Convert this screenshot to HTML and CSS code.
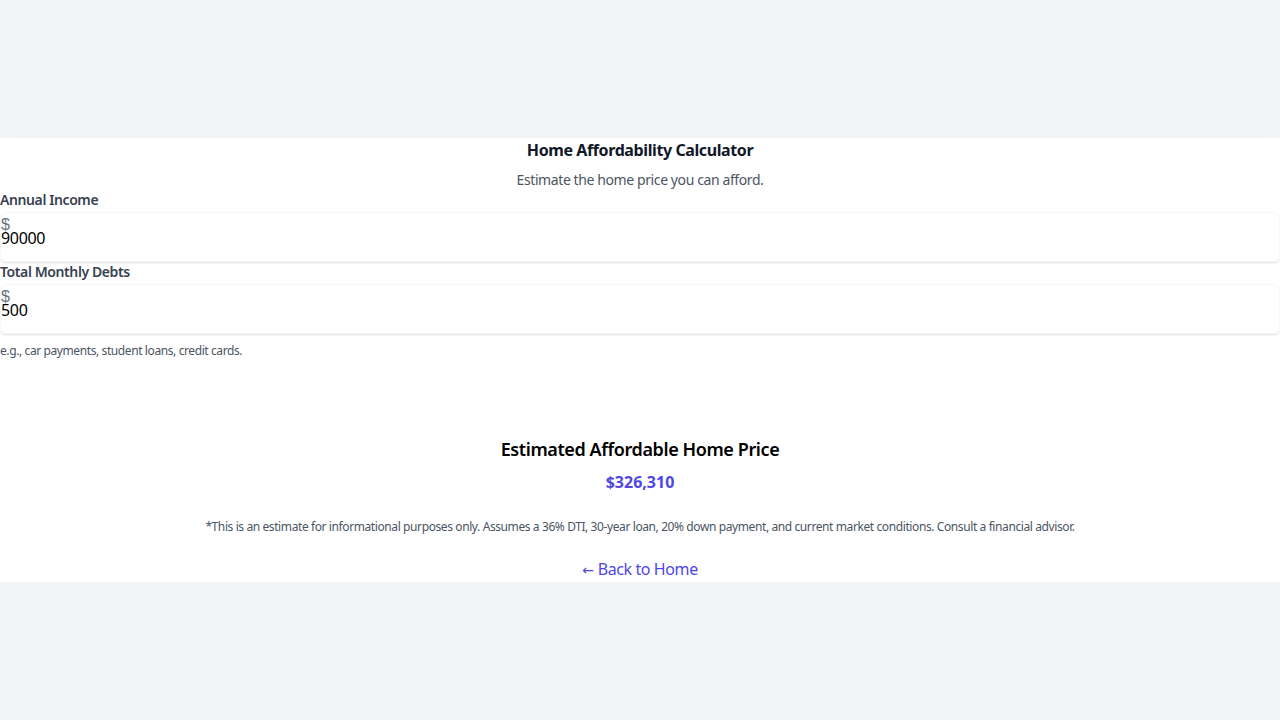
FILE: index.html
```html
<!DOCTYPE html>
<html lang="en">
<head>
<meta charset="utf-8">
<title>Home Affordability Calculator</title>
<link rel="stylesheet" href="styles.css">
</head>
<body>
<main class="page">
  <section class="card">
    <header class="head">
      <h1 class="title">Home Affordability Calculator</h1>
      <p class="subtitle">Estimate the home price you can afford.</p>
    </header>
    <div class="form">
      <label class="label" for="income">Annual Income</label>
      <div class="field">
        <span class="prefix">$</span>
        <input class="input" id="income" type="text" value="90000">
      </div>
      <label class="label" for="debts">Total Monthly Debts</label>
      <div class="field">
        <span class="prefix">$</span>
        <input class="input" id="debts" type="text" value="500">
      </div>
      <p class="help">e.g., car payments, student loans, credit cards.</p>
    </div>
    <div class="result">
      <h2 class="result-title">Estimated Affordable Home Price</h2>
      <p class="amount">$326,310</p>
      <p class="note">*This is an estimate for informational purposes only. Assumes a 36% DTI, 30-year loan, 20% down payment, and current market conditions. Consult a financial advisor.</p>
      <a class="back" href="#"><span class="arrow">←</span> Back to Home</a>
    </div>
  </section>
</main>
</body>
</html>
```
FILE: styles.css
```css
html, body {
  margin: 0;
  padding: 0;
}
body {
  background: #f3f4f6;
  font-family: "Noto Sans", "Open Sans", sans-serif;
  letter-spacing: -0.025em;
  color: #111827;
}
.page {
  padding-top: 138px;
}
.card {
  background: #ffffff;
  box-shadow: 0 12px 20px -4px rgba(0,0,0,0.16), 0 4px 8px -4px rgba(0,0,0,0.12);
  display: flex;
  flex-direction: column;
}
.head {
  text-align: center;
}
.title {
  margin: 0;
  font-size: 16px;
  line-height: 24px;
  font-weight: 700;
  color: #111827;
}
.subtitle {
  margin: 8px 0 0;
  font-size: 14px;
  line-height: 20px;
  color: #4b5563;
}
.form {
  display: flex;
  flex-direction: column;
}
.label {
  display: block;
  font-size: 14px;
  line-height: 20px;
  font-weight: 600;
  color: #374151;
}
.field {
  margin-top: 2px;
  height: 50px;
  box-sizing: border-box;
  border: 1px solid #f6f7f8;
  border-radius: 6px;
  box-shadow: 0 1px 2px rgba(0,0,0,0.12);
  display: flex;
  flex-direction: column;
  padding-top: 9px;
}
.prefix {
  display: block;
  height: 6px;
  font-family: "Liberation Sans", sans-serif;
  font-size: 16px;
  line-height: 6px;
  color: #6b7280;
  letter-spacing: 0;
}
.input {
  border: 0;
  outline: none;
  padding: 0;
  margin: 0;
  font-family: "Noto Sans", "Open Sans", sans-serif;
  font-size: 16px;
  line-height: 20px;
  letter-spacing: -0.02em;
  color: #000;
  background: transparent;
}
.help {
  margin: 9px 0 0;
  font-size: 12px;
  line-height: 16px;
  color: #4b5563;
}
.result {
  text-align: center;
  padding-top: 76px;
}
.result-title {
  margin: 0;
  font-size: 18px;
  line-height: 28px;
  font-weight: 600;
  color: #000;
}
.amount {
  margin: 7px 0 0;
  font-size: 16px;
  line-height: 24px;
  font-weight: 700;
  color: #4f46e5;
  letter-spacing: 0;
}
.note {
  margin: 25px 0 0;
  font-size: 12px;
  line-height: 16px;
  color: #4b5563;
}
.back {
  display: block;
  margin-top: 22px;
  font-size: 16px;
  line-height: 24px;
  color: #4f46e5;
  text-decoration: none;
}
.arrow {
  font-family: "DejaVu Sans", sans-serif;
  font-size: 14px;
  letter-spacing: 0;
}
```
